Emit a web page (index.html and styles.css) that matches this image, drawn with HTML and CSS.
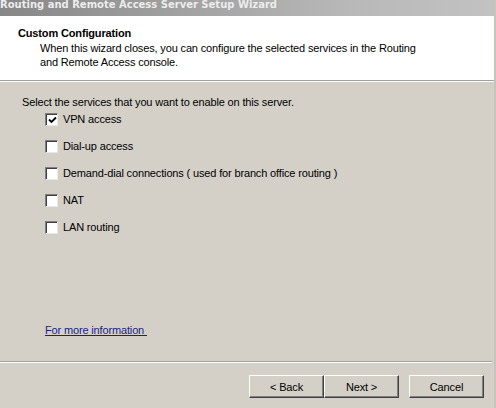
FILE: index.html
```html
<!DOCTYPE html>
<html>
<head>
<meta charset="utf-8">
<link rel="stylesheet" href="styles.css">
</head>
<body>
<div class="window">
  <div class="titlebar"><span class="title-text">Routing and Remote Access Server Setup Wizard</span></div>
  <div class="header">
    <div class="h-title">Custom Configuration</div>
    <div class="h-desc">When this wizard closes, you can configure the selected services in the Routing<br>and Remote Access console.</div>
  </div>
  <div class="sep"></div>
  <div class="content">
    <div class="intro">Select the services that you want to enable on this server.</div>
    <ul class="options">
      <li class="opt"><span class="cb checked"><svg width="9" height="9" viewBox="0 0 9 9"><path d="M1 3.5 L3.5 6 L8 1.5" fill="none" stroke="#000" stroke-width="1.8"/></svg></span><span>VPN access</span></li>
      <li class="opt"><span class="cb"></span><span>Dial-up access</span></li>
      <li class="opt"><span class="cb"></span><span>Demand-dial connections ( used for branch office routing )</span></li>
      <li class="opt"><span class="cb"></span><span>NAT</span></li>
      <li class="opt"><span class="cb"></span><span>LAN routing</span></li>
    </ul>
    <div class="spacer"></div>
    <a class="more" href="#">For more information&nbsp;</a>
  </div>
  <div class="sep2"></div>
  <div class="buttons">
    <button class="btn">&lt; Back</button>
    <button class="btn">Next &gt;</button>
    <button class="btn cancel">Cancel</button>
  </div>
</div>
</body>
</html>
```
FILE: styles.css
```css
html, body {
  margin: 0;
  padding: 0;
  width: 496px;
  height: 408px;
  overflow: hidden;
  background: #d4d0c8;
}
.window {
  width: 496px;
  height: 408px;
  display: flex;
  flex-direction: column;
  font-family: "Liberation Sans", Arial, sans-serif;
  font-size: 11px;
  letter-spacing: -0.15px;
  color: #000;
  box-sizing: border-box;
  border-right: 2px solid #c8c4bc;
}
.titlebar {
  height: 16px;
  flex: none;
  background: linear-gradient(to right, #878787, #b8b8b8 70%, #c2c2c2);
  overflow: hidden;
}
.title-text {
  display: block;
  font-family: "DejaVu Sans", Verdana, sans-serif;
  font-weight: bold;
  font-size: 10px;
  line-height: 12px;
  margin-top: -1px;
  color: #ececec;
  white-space: nowrap;
  letter-spacing: 0;
}
.header {
  height: 64px;
  flex: none;
  background: #fff;
  box-sizing: border-box;
  padding: 10px 0 0 18px;
}
.h-title {
  font-weight: bold;
  font-size: 11px;
  line-height: 14px;
  margin-bottom: 1px;
}
.h-desc {
  padding-left: 22px;
  line-height: 14px;
}
.sep {
  height: 1px;
  flex: none;
  background: #a0a0a0;
  border-bottom: 1px solid #fff;
}
.content {
  flex: 1;
  display: flex;
  flex-direction: column;
  padding: 13px 0 0 22px;
}
.intro {
  line-height: 14px;
}
.options {
  list-style: none;
  margin: 4px 0 0 23px;
  padding: 0;
  display: flex;
  flex-direction: column;
  gap: 14px;
}
.opt {
  display: flex;
  align-items: center;
  gap: 5px;
  height: 13px;
  line-height: 13px;
}
.cb {
  width: 13px;
  height: 13px;
  box-sizing: border-box;
  background: #fff;
  border-top: 1px solid #808080;
  border-left: 1px solid #808080;
  border-right: 1px solid #e8e8e8;
  border-bottom: 1px solid #e8e8e8;
  box-shadow: inset 1px 1px 0 #404040;
  display: flex;
  align-items: center;
  justify-content: center;
  flex: none;
}
.cb svg { margin: 1px 0 0 1px; }
.spacer { flex: 1; }
.more {
  margin-left: 23px;
  margin-bottom: 24px;
  color: #1c1c8a;
  text-decoration: underline;
  line-height: 14px;
  align-self: flex-start;
}
.sep2 {
  height: 1px;
  flex: none;
  margin-right: 2px;
  background: #a0a0a0;
  border-bottom: 1px solid #fff;
}
.buttons {
  height: 45px;
  flex: none;
  display: flex;
  justify-content: flex-end;
  align-items: flex-start;
  padding: 12px 10px 0 0;
  box-sizing: border-box;
}
.btn {
  width: 75px;
  height: 23px;
  box-sizing: border-box;
  background: #d4d0c8;
  font-family: "Liberation Sans", Arial, sans-serif;
  font-size: 11px;
  letter-spacing: -0.15px;
  color: #000;
  border-top: 1px solid #fff;
  border-left: 1px solid #fff;
  border-right: 1px solid #404040;
  border-bottom: 1px solid #404040;
  box-shadow: inset -1px -1px 0 #808080;
  padding: 0;
  margin: 0;
}
.cancel { margin-left: 10px; }
```
